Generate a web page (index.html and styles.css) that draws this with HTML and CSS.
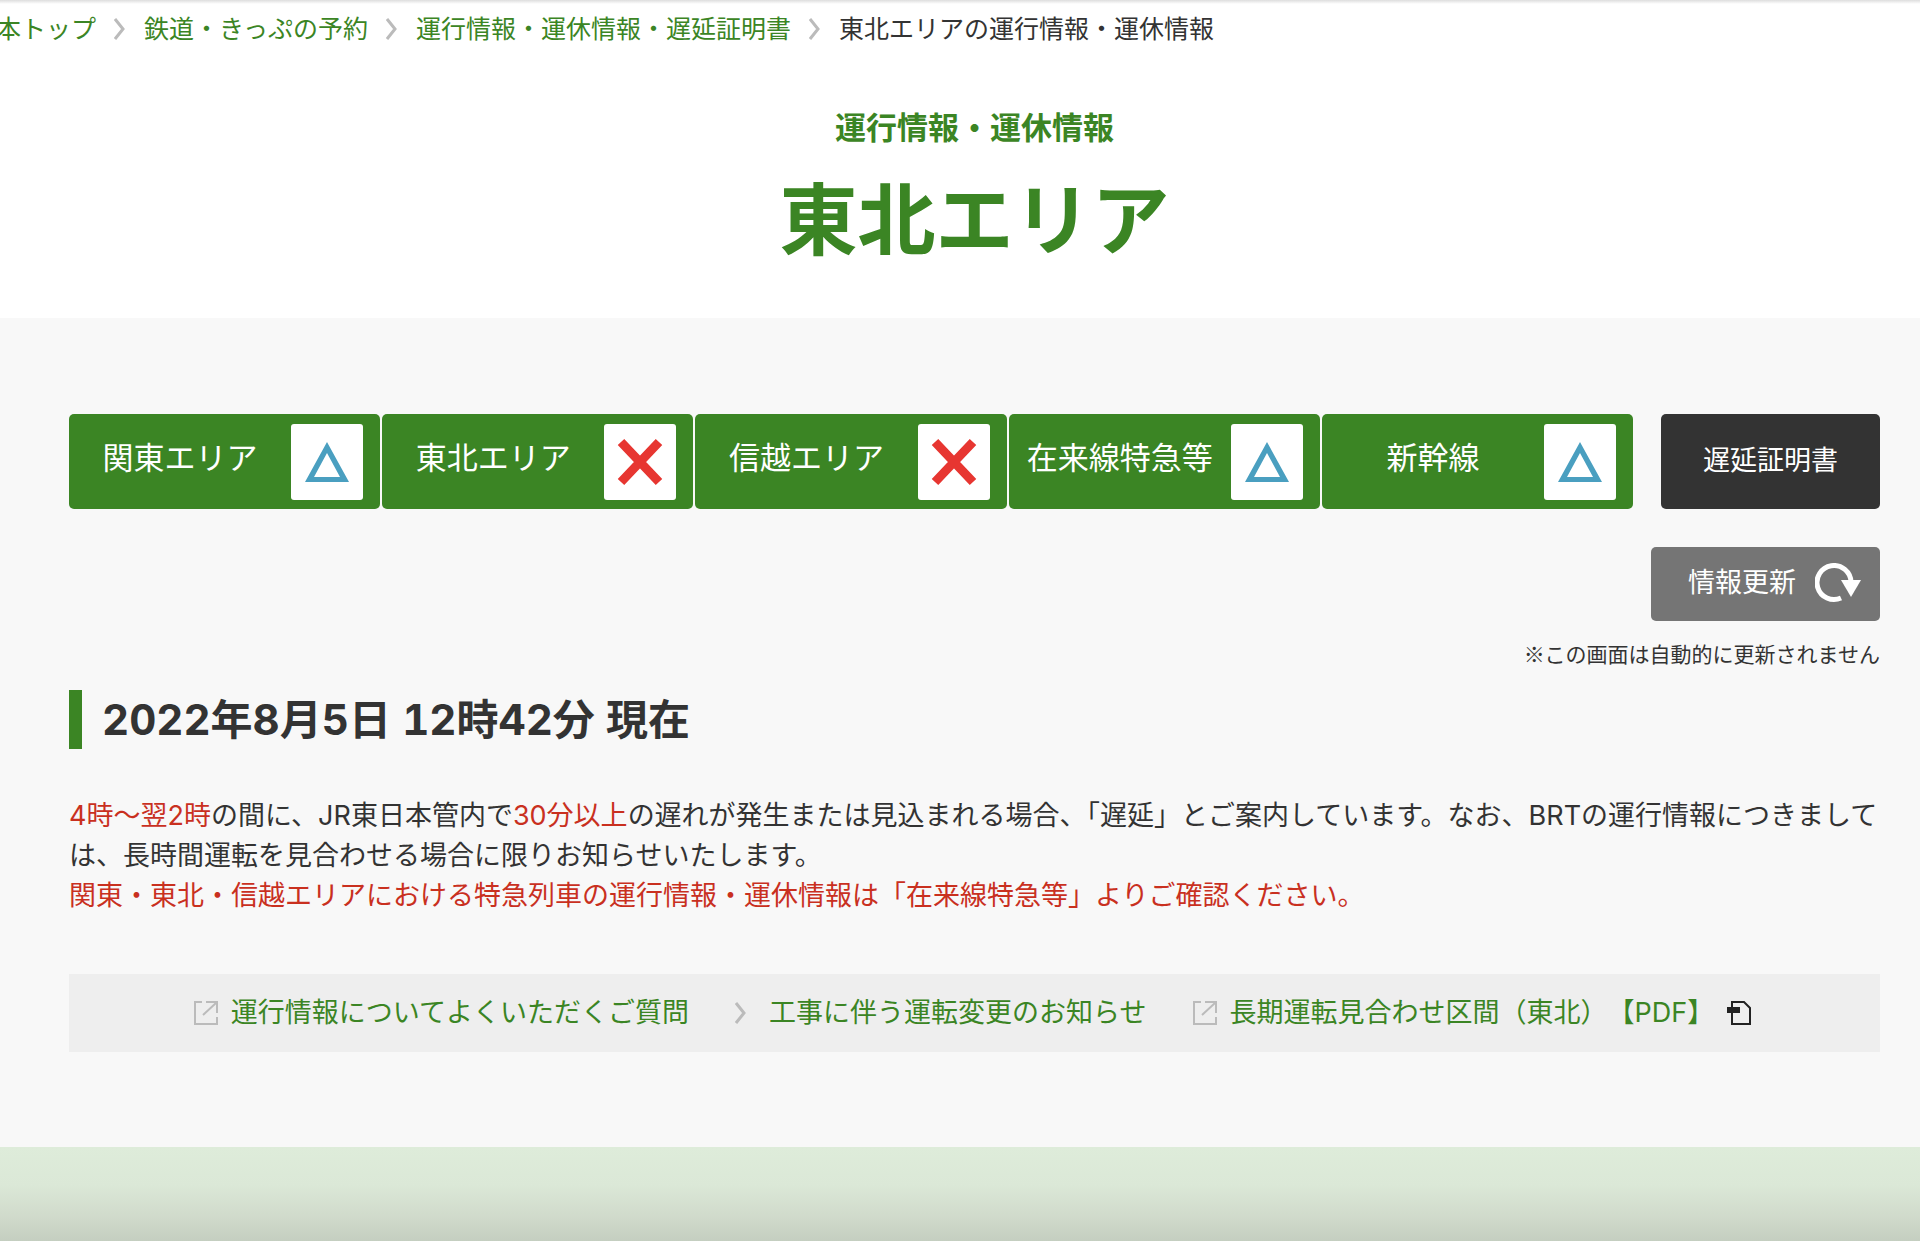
FILE: index.html
```html
<!DOCTYPE html>
<html lang="ja">
<head>
    <meta charset="UTF-8">
    <meta name="viewport" content="width=device-width, initial-scale=1.0">
    <title>東北エリアの運行情報・運休情報</title>
    <link rel="stylesheet" href="styles.css">
</head>
<body>
    <!-- Shared icons -->
    <svg class="icon-defs" aria-hidden="true">
        <symbol id="icon-delay" viewBox="0 0 72 76">
            <path fill="#4a9fc0" fill-rule="evenodd" d="M36 18L58 58H14ZM36 29L23 53H49Z"/>
        </symbol>
        <symbol id="icon-stop" viewBox="0 0 72 76">
            <path fill="none" stroke="#e73631" stroke-width="9" d="M17 18L55 58M55 18L17 58"/>
        </symbol>
        <symbol id="icon-arrow" viewBox="0 0 11 22">
            <path fill="none" stroke="#bbb" stroke-width="3" d="M1 1L9 11L1 21"/>
        </symbol>
        <symbol id="icon-blank" viewBox="0 0 24 24">
            <path fill="none" stroke="#bbb" stroke-width="2" d="M8 1H1V23H23V16M12 1H23V12M9 14L22 2"/>
        </symbol>
    </svg>

    <header class="page-header">
        <nav class="breadcrumb" aria-label="パンくずリスト">
            <ol>
                <li><a href="#">本トップ</a></li>
                <li><svg class="arrow"><use href="#icon-arrow"/></svg><a href="#">鉄道・きっぷの予約</a></li>
                <li><svg class="arrow"><use href="#icon-arrow"/></svg><a href="#">運行情報・運休情報・遅延証明書</a></li>
                <li><svg class="arrow"><use href="#icon-arrow"/></svg><span>東北エリアの運行情報・運休情報</span></li>
            </ol>
        </nav>
        <div class="title">
            <p>運行情報・運休情報</p>
            <h1>東北エリア</h1>
        </div>
    </header>

    <main class="content">
        <div class="tabs-row">
            <nav class="tabs" aria-label="エリア">
                <a href="#"><span>関東エリア</span><svg class="status"><use href="#icon-delay"/></svg></a>
                <a href="#"><span>東北エリア</span><svg class="status"><use href="#icon-stop"/></svg></a>
                <a href="#"><span>信越エリア</span><svg class="status"><use href="#icon-stop"/></svg></a>
                <a href="#"><span>在来線特急等</span><svg class="status"><use href="#icon-delay"/></svg></a>
                <a href="#"><span>新幹線</span><svg class="status"><use href="#icon-delay"/></svg></a>
            </nav>
            <a href="#" class="certificate">遅延証明書</a>
        </div>

        <div class="refresh">
            <button type="button">
                情報更新
                <svg width="46" height="40" viewBox="0 0 46 40" aria-hidden="true">
                    <path fill="none" stroke="#fff" stroke-width="5" d="M26 35A17 17 0 1 1 36 19"/>
                    <path fill="#fff" d="M26 17H46L36 34Z"/>
                </svg>
            </button>
            <p>※この画面は自動的に更新されません</p>
        </div>

        <h2>2022年8月5日 12時42分 現在</h2>

        <p class="notice">
            <em>4時〜翌2時</em>の間に、JR東日本管内で<em>30分以上</em>の遅れが発生または見込まれる場合、「遅延」とご案内しています。なお、BRTの運行情報につきましては、長時間運転を見合わせる場合に限りお知らせいたします。<br>
            <em>関東・東北・信越エリアにおける特急列車の運行情報・運休情報は「在来線特急等」よりご確認ください。</em>
        </p>

        <ul class="links">
            <li><svg class="blank"><use href="#icon-blank"/></svg><a href="#">運行情報についてよくいただくご質問</a></li>
            <li class="inner"><svg class="arrow"><use href="#icon-arrow"/></svg><a href="#">工事に伴う運転変更のお知らせ</a></li>
            <li>
                <svg class="blank"><use href="#icon-blank"/></svg><a href="#">長期運転見合わせ区間（東北）【PDF】</a>
                <svg class="pdf" width="24" height="24" viewBox="0 0 24 24" aria-hidden="true">
                    <path fill="none" stroke="#222" stroke-width="2" d="M5 1H17L23 7V23H5Z"/>
                    <path fill="#222" d="M0 6H13V12H0Z"/>
                </svg>
            </li>
        </ul>
    </main>

    <footer class="page-footer"></footer>
</body>
</html>
```

FILE: styles.css
```css
* {
    box-sizing: border-box;
}
body {
    display: flex;
    flex-direction: column;
    min-height: 100vh;
    margin: 0;
    overflow-x: hidden;
    font-family: Inter, "Noto Sans CJK JP", sans-serif;
    font-size: 27px;
    line-height: 40px;
    color: #333;
    background-color: #fff;
}
h1, h2, p, ol, ul {
    margin: 0;
    padding: 0;
}
ol, ul {
    list-style: none;
}
a {
    color: #3b8524;
    text-decoration: none;
}
a:hover {
    text-decoration: underline;
}
em {
    font-style: normal;
    color: #c9301f;
}
.icon-defs {
    display: none;
}
.arrow {
    flex: none;
    width: 11px;
    height: 22px;
}
.blank {
    flex: none;
    width: 24px;
    height: 24px;
}

/* Header */
.page-header {
    padding-bottom: 47px;
    background: linear-gradient(#ddd, #fff 4px);
}
.breadcrumb ol {
    display: flex;
    margin-left: -4px;
    padding-top: 9px;
    font-size: 25px;
    white-space: nowrap;
}
.breadcrumb li {
    display: flex;
    align-items: center;
}
.breadcrumb .arrow {
    margin: 0 19px 0 18px;
}
.title {
    padding: 59px 40px 0 69px;
    text-align: center;
    font-weight: bold;
    color: #3b8524;
}
.title p {
    font-size: 31px;
}
.title h1 {
    margin-top: 23px;
    font-size: 78px;
    line-height: 100px;
}

/* Main area */
.content {
    padding: 96px 40px 95px 69px;
    background-color: #f8f8f8;
}
.tabs-row {
    display: flex;
    gap: 28px;
}
.tabs {
    display: grid;
    grid-template-columns: repeat(5, 1fr);
    flex: 1;
    gap: 2px;
}
.tabs a {
    display: flex;
    align-items: center;
    height: 95px;
    padding-right: 17px;
    border-radius: 5px;
    font-size: 31px;
    color: #fff;
    background-color: #3b8524;
}
.tabs span {
    flex: 1;
    padding-bottom: 7px;
    text-align: center;
    white-space: nowrap;
}
.status {
    width: 72px;
    height: 76px;
    border-radius: 3px;
    background-color: #fff;
}
.certificate {
    display: flex;
    align-items: center;
    justify-content: center;
    width: 219px;
    padding-bottom: 2px;
    border-radius: 5px;
    color: #fff;
    background-color: #333;
}
.refresh {
    display: flex;
    flex-direction: column;
    align-items: flex-end;
    margin-top: 38px;
}
.refresh button {
    display: flex;
    align-items: center;
    gap: 19px;
    height: 74px;
    padding: 0 19px 3px 37px;
    border: none;
    border-radius: 5px;
    font: inherit;
    color: #fff;
    background-color: #757575;
    cursor: pointer;
}
.refresh p {
    margin-top: 12px;
    font-family: "Noto Sans CJK JP", sans-serif;
    font-size: 21px;
}
h2 {
    margin-top: 17px;
    padding-left: 20px;
    border-left: 13px solid #3b8524;
    font-size: 42px;
    line-height: 59px;
    font-variant-numeric: tabular-nums;
}
.notice {
    margin-top: 47px;
}
.links {
    display: flex;
    justify-content: center;
    gap: 46px;
    margin-top: 58px;
    padding: 19px 4px 19px 0;
    white-space: nowrap;
    text-spacing-trim: space-all;
    background-color: #eee;
}
.links li {
    display: flex;
    align-items: center;
    gap: 13px;
}
.links .inner {
    gap: 23px;
}

.page-footer {
    flex: 1;
    min-height: 94px;
    background: linear-gradient(#deecda 0%, #dbe8d7 40%, #d0dacb 75%, #c4cec0 100%);
}
```
